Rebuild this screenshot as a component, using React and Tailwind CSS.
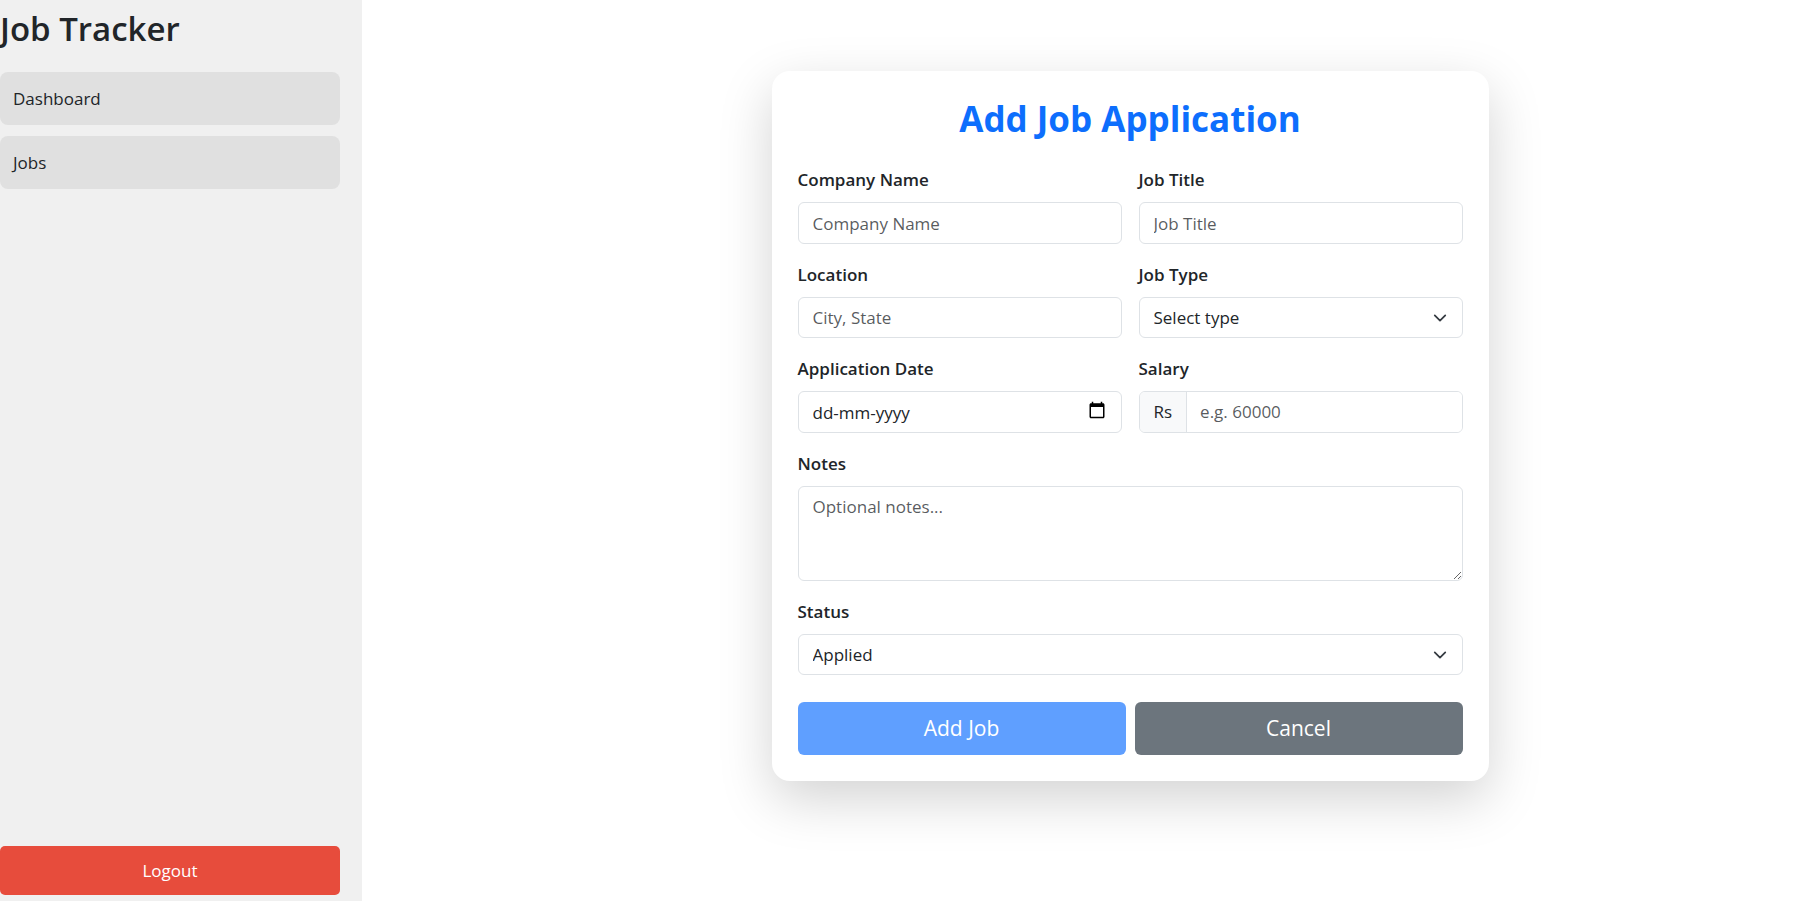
import { useId } from "react";

const control =
  "block w-full rounded-md border border-[#dee2e6] bg-white px-3.5 text-[17px] text-[#212529] placeholder:text-[#212529]/75 focus:outline-2 focus:outline-[#86b7fe]";

function Field({ label, children }) {
  const id = useId();
  return (
    <div className="flex flex-col gap-[9px]">
      <label htmlFor={id} className="text-[17px] leading-[26px] font-semibold">
        {label}
      </label>
      {children(id)}
    </div>
  );
}

function Select({ id, options }) {
  return (
    <div className="relative">
      <select id={id} className={`${control} h-[41px] appearance-none pr-10`}>
        {options.map((option) => (
          <option key={option}>{option}</option>
        ))}
      </select>
      <svg
        aria-hidden="true"
        viewBox="0 0 16 16"
        className="pointer-events-none absolute inset-y-0 right-4 my-auto size-3.5"
      >
        <path
          d="m2 5 6 6 6-6"
          fill="none"
          stroke="#343a40"
          strokeWidth="2"
          strokeLinecap="round"
          strokeLinejoin="round"
        />
      </svg>
    </div>
  );
}

function Sidebar() {
  return (
    <aside className="flex w-[362px] shrink-0 flex-col bg-[#f0f0f0] pr-[22px] pb-1.5">
      <h1 className="pt-2 text-[33px] leading-[42px] font-semibold">Job Tracker</h1>
      <nav className="mt-[22px] flex flex-col gap-[11px]">
        <a href="#dashboard" className="rounded-lg bg-[#e0e0e0] px-[13px] py-3.5 text-[17px] leading-[25px]">
          Dashboard
        </a>
        <a href="#jobs" className="rounded-lg bg-[#e0e0e0] px-[13px] py-3.5 text-[17px] leading-[25px]">
          Jobs
        </a>
      </nav>
      <button type="button" className="mt-auto h-[49px] rounded-[5px] bg-[#e74c3c] text-[17px] text-white">
        Logout
      </button>
    </aside>
  );
}

function JobForm() {
  return (
    <form
      onSubmit={(event) => event.preventDefault()}
      className="w-full max-w-[717px] rounded-[18px] bg-white p-[26px] shadow-[0_18px_53px_rgba(0,0,0,0.175)]"
    >
      <h2 className="mb-[26px] text-center text-[35px] leading-[44px] font-bold text-[#0d6efd]">
        Add Job Application
      </h2>
      <div className="grid grid-cols-2 gap-x-[17px] gap-y-[18px]">
        <Field label="Company Name">
          {(id) => <input id={id} type="text" placeholder="Company Name" className={`${control} h-[42px]`} />}
        </Field>
        <Field label="Job Title">
          {(id) => <input id={id} type="text" placeholder="Job Title" className={`${control} h-[42px]`} />}
        </Field>
        <Field label="Location">
          {(id) => <input id={id} type="text" placeholder="City, State" className={`${control} h-[41px]`} />}
        </Field>
        <Field label="Job Type">
          {(id) => <Select id={id} options={["Select type", "Full-time", "Part-time", "Internship"]} />}
        </Field>
        <Field label="Application Date">
          {(id) => (
            <div className="relative">
              <input
                id={id}
                type="text"
                inputMode="numeric"
                placeholder="dd-mm-yyyy"
                className="block h-[42px] w-full rounded-md border border-[#dee2e6] bg-white px-3.5 text-[17px] text-[#212529] placeholder:text-[#212529] focus:outline-2 focus:outline-[#86b7fe]"
              />
              <button
                type="button"
                aria-label="Open calendar"
                className="absolute top-2.5 right-4 size-[18px]"
              >
                <svg viewBox="0 0 24 24" className="size-[18px]">
                  <path d="M20 3h-1V1h-2v2H7V1H5v2H4c-1.1 0-2 .9-2 2v16c0 1.1.9 2 2 2h16c1.1 0 2-.9 2-2V5c0-1.1-.9-2-2-2zm0 18H4V8h16v13z" />
                </svg>
              </button>
            </div>
          )}
        </Field>
        <Field label="Salary">
          {(id) => (
            <div className="flex h-[42px] overflow-hidden rounded-md border border-[#dee2e6] focus-within:outline-2 focus-within:outline-[#86b7fe]">
              <span className="flex items-center border-r border-[#dee2e6] bg-[#f8f9fa] px-3.5 text-[17px]">Rs</span>
              <input
                id={id}
                type="text"
                inputMode="numeric"
                placeholder="e.g. 60000"
                className="w-full min-w-0 flex-1 bg-white px-[13px] text-[17px] outline-none placeholder:text-[#212529]/75"
              />
            </div>
          )}
        </Field>
        <div className="col-span-2">
          <Field label="Notes">
            {(id) => (
              <textarea
                id={id}
                placeholder="Optional notes..."
                className={`${control} h-[95px] resize-y py-[7px] leading-[26px]`}
              />
            )}
          </Field>
        </div>
        <div className="col-span-2">
          <Field label="Status">
            {(id) => <Select id={id} options={["Applied", "Interview", "Offer", "Rejected"]} />}
          </Field>
        </div>
      </div>
      <div className="mt-[27px] grid grid-cols-2 gap-[9px]">
        <button type="submit" className="h-[53px] rounded-md bg-[#5f9fff] text-[21px] text-white">
          Add Job
        </button>
        <button type="button" className="h-[53px] rounded-md bg-[#6c757d] text-[21px] text-white">
          Cancel
        </button>
      </div>
    </form>
  );
}

export default function App() {
  return (
    <div className="flex min-h-screen bg-white font-['Open_Sans','Noto_Sans',sans-serif] text-[#212529]">
      <Sidebar />
      <main className="flex flex-1 items-start justify-center pt-[71px] pb-16 pl-20">
        <JobForm />
      </main>
    </div>
  );
}
